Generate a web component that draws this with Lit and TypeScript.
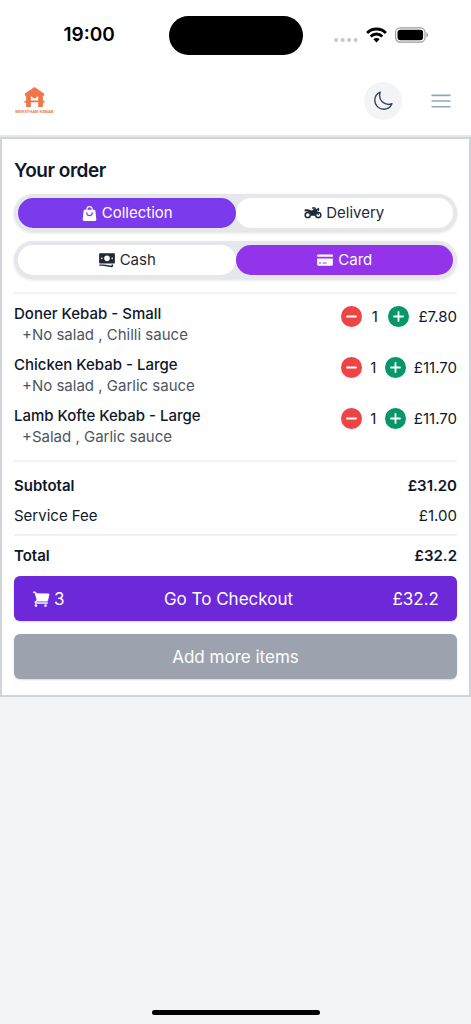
import { LitElement, html, css } from "lit";
import { customElement, property, state } from "lit/decorators.js";

interface Item {
  name: string;
  extras: string;
  qty: number;
  price: string;
}

const moon = html`<svg width="22" height="22" viewBox="0 0 24 24" fill="none" stroke="currentColor" stroke-width="1.5" stroke-linecap="round" stroke-linejoin="round"><path d="M21.752 15.002A9.72 9.72 0 0118 15.75c-5.385 0-9.75-4.365-9.75-9.75 0-1.33.266-2.597.748-3.752A9.753 9.753 0 003 11.25C3 16.635 7.365 21 12.75 21a9.753 9.753 0 009.002-5.998z"/></svg>`;

const bars = html`<svg width="26" height="26" viewBox="0 0 24 24" fill="none" stroke="currentColor" stroke-width="1.5" stroke-linecap="round"><path d="M3.75 6.75h16.5M3.75 12h16.5M3.75 17.25h16.5"/></svg>`;

const bag = html`<svg width="17" height="17" viewBox="0 0 24 24"><path fill="currentColor" fill-rule="evenodd" d="M7.5 6v.75H5.513c-.96 0-1.764.724-1.865 1.679l-1.263 12A1.875 1.875 0 004.25 22.5h15.5a1.875 1.875 0 001.865-2.071l-1.263-12a1.875 1.875 0 00-1.865-1.679H16.5V6a4.5 4.5 0 10-9 0zM12 3a3 3 0 00-3 3v.75h6V6a3 3 0 00-3-3zm-3 8.25a3 3 0 106 0v-.75a.75.75 0 011.5 0v.75a4.5 4.5 0 11-9 0v-.75a.75.75 0 011.5 0v.75z"/></svg>`;

const bike = html`<svg width="18" height="12" viewBox="0 0 36 24" fill="none" stroke="currentColor"><circle cx="7.500" cy="16" r="5.200" stroke-width="3"/><circle cx="28.500" cy="16" r="5.200" stroke-width="3"/><path fill="currentColor" stroke="none" d="M1 5.500C5 4 10 4.500 13 6.500l3 .5 4-3h5l2 4-5 9.500h-8c0-5-3-8-7-8.500L1 8.500z"/><path stroke-width="2.600" stroke-linecap="round" stroke-linejoin="round" d="M17 2h5l6.500 13M25 6l4-3v4"/></svg>`;

const cash = html`<svg width="18" height="18" viewBox="0 0 24 24" fill="currentColor"><path fill-rule="evenodd" d="M2.500 3h19a1 1 0 011 1v11.500a1 1 0 01-1 1h-19a1 1 0 01-1-1V4a1 1 0 011-1zM8.250 9.750a3.750 3.750 0 107.500 0 3.750 3.750 0 00-7.500 0zM17.800 9.750a1.100 1.100 0 102.200 0 1.100 1.100 0 00-2.200 0zM4 9.750a1.100 1.100 0 102.200 0 1.100 1.100 0 00-2.200 0z"/><path d="M2.250 18a.75.75 0 000 1.500c5.400 0 10.630.722 15.600 2.075 1.190.324 2.400-.558 2.400-1.820V18.750a.75.75 0 00-.75-.75h-1.500v1.500C13 18.600 8 18 2.250 18z"/></svg>`;

const card = html`<svg width="18" height="18" viewBox="0 0 24 24" fill="currentColor"><path d="M3 4.500A1.500 1.500 0 001.500 6v1.700h21V6A1.500 1.500 0 0021 4.500z"/><path fill-rule="evenodd" d="M1.500 10h21v8a1.500 1.500 0 01-1.500 1.500H3A1.500 1.500 0 011.500 18zM4 15.200v1.600h3v-1.600zm5 0v1.600h5v-1.600z"/></svg>`;

const cart = html`<svg width="18" height="18" viewBox="0 0 24 24" fill="currentColor" stroke="currentColor" stroke-width=".6"><path d="M2.250 2.250a.75.75 0 000 1.500h1.386c.17 0 .318.114.362.278l2.558 9.592a3.752 3.752 0 00-2.806 3.630c0 .414.336.75.75.75h15.750a.75.75 0 000-1.500H5.378A2.250 2.250 0 017.500 15h12.718a.75.75 0 00.674-.421l1.960-8.500a.75.75 0 00-.725-.965L5.680 4.509l-.232-.867A1.875 1.875 0 003.636 2.250H2.250zM3.750 20.750a1.500 1.500 0 113 0 1.500 1.500 0 01-3 0zM16.500 20.750a1.500 1.500 0 113 0 1.500 1.500 0 01-3 0z"/></svg>`;

@customElement("status-bar")
class StatusBar extends LitElement {
  static styles = css`
    :host {
      display: grid;
      grid-template-columns: 1fr auto 1fr;
      align-items: center;
      height: 70px;
      background: #fff;
      color: #000;
    }
    .time {
      padding-left: 10px;
      justify-self: center;
      font-size: 19px;
      font-weight: 600;
      line-height: 24px;
    }
    .island {
      width: 134px;
      height: 39px;
      border-radius: 20px;
      background: #000;
    }
    .signals {
      display: flex;
      align-items: center;
      justify-self: center;
      gap: 8px;
      padding-right: 10px;
    }
  `;
  render() {
    return html`
      <span class="time">19:00</span>
      <span class="island"></span>
      <span class="signals">
        <svg width="24" height="16" viewBox="0 0 24 16" fill="#c8c8c8"><circle cx="2.100" cy="13" r="2.100"/><circle cx="8.600" cy="13" r="2.100"/><circle cx="15.100" cy="13" r="2.100"/><circle cx="21.600" cy="13" r="2.100"/></svg>
        <svg width="21" height="16" viewBox="0 0 21 16" fill="none" stroke="#000" stroke-width="2.800"><path d="M1.100 5.900a13.300 13.300 0 0118.800 0M4.700 9.400a8.200 8.200 0 0111.600 0"/><path fill="#000" stroke="none" d="M10.500 15.400l-3.100-3.100a4.400 4.400 0 016.200 0z"/></svg>
        <svg width="34" height="16" viewBox="0 0 34 16"><rect x=".6" y=".9" width="29.400" height="14.200" rx="4.600" fill="none" stroke="#999" stroke-width="1.100"/><rect x="2.500" y="2.800" width="25.600" height="10.400" rx="3" fill="#000"/><path fill="#999" d="M31.400 5.600c2 .6 2 4.200 0 4.800z"/></svg>
      </span>
    `;
  }
}

@customElement("site-header")
class SiteHeader extends LitElement {
  static styles = css`
    :host {
      box-sizing: border-box;
      display: flex;
      align-items: center;
      justify-content: space-between;
      height: 67px;
      padding: 0 17px 4px 14px;
      background: #fff;
      border-bottom: 2px solid #e5e7eb;
    }
    .logo,
    svg {
      display: block;
    }
    .brand {
      font-family: "Liberation Sans Narrow", "Liberation Sans", Arial, sans-serif;
      font-size: 4px;
      font-weight: 700;
    }
    .actions {
      display: flex;
      align-items: center;
      gap: 26px;
    }
    button {
      display: grid;
      place-items: center;
      padding: 0;
      border: 0;
      background: none;
      color: #94a3b8;
    }
    .theme {
      width: 38px;
      height: 38px;
      border-radius: 50%;
      background: #f3f4f6;
      color: #334155;
    }
  `;
  render() {
    return html`
      <a class="logo" href="#" aria-label="Merstham Kebab">
        <svg width="41" height="30" viewBox="-3 0 41 30" fill="#f0764a"><path fill-rule="evenodd" d="M17.500 1L27 7.500v2.200h-1.100v5h1.600v2h-1.600V21h-4.700v-4.700h-7.300V21H9.100v-4.300H7.500v-2h1.600v-5H8V7.500zM13.900 10v4.500h7.300V10l-3.700 2.700z"/><text class="brand" x="17.500" y="27" text-anchor="middle">MERSTHAM KEBAB</text></svg>
      </a>
      <div class="actions">
        <button class="theme" aria-label="Dark mode">${moon}</button>
        <button aria-label="Menu">${bars}</button>
      </div>
    `;
  }
}

@customElement("pill-switch")
class PillSwitch extends LitElement {
  @property({ attribute: false }) options: { label: string; icon: unknown }[] = [];
  @property({ type: Number }) selected = 0;
  @property() tone = "violet";
  static styles = css`
    :host {
      display: grid;
      grid-template-columns: 1fr 1fr;
      padding: 4px;
      border-radius: 20px;
      background: #e5e7eb;
      box-shadow: 0 1px 3px rgb(0 0 0 / 0.12);
    }
    button {
      display: flex;
      align-items: center;
      justify-content: center;
      gap: 4px;
      height: 30px;
      padding: 0;
      border: 0;
      border-radius: 15px;
      background: #fff;
      color: #1f2937;
      font: 400 15px/22px Inter, sans-serif;
    }
    .violet[aria-pressed="true"] {
      background: #7c3aed;
      color: #fff;
    }
    .purple[aria-pressed="true"] {
      background: #9333ea;
      color: #fff;
    }
  `;
  render() {
    return this.options.map(
      (o, i) => html`<button class=${this.tone} aria-pressed=${i === this.selected ? "true" : "false"} @click=${() => (this.selected = i)}>${o.icon}<span>${o.label}</span></button>`
    );
  }
}

@customElement("order-line")
class OrderLine extends LitElement {
  @property({ attribute: false }) item!: Item;
  static styles = css`
    :host {
      display: flex;
      justify-content: space-between;
      font-size: 15px;
      line-height: 21px;
    }
    .name {
      color: #0f172a;
      font-weight: 500;
    }
    .extras {
      padding-left: 8px;
      color: #4b5563;
    }
    .controls {
      display: flex;
      align-items: center;
      justify-content: space-between;
      width: 116px;
      height: 26px;
      color: #0f172a;
    }
    button {
      display: grid;
      place-items: center;
      width: 21px;
      height: 21px;
      padding: 0;
      border: 0;
      border-radius: 50%;
      color: #fff;
      box-shadow: 0 1px 4px rgb(0 0 0 / 0.08);
    }
    .minus {
      background: #ef4444;
    }
    .plus {
      background: #059669;
    }
  `;
  render() {
    const { name, extras, qty, price } = this.item;
    const sign = (d: string) => html`<svg width="13" height="13" viewBox="0 0 13 13" fill="none" stroke="currentColor" stroke-width="1.800" stroke-linecap="round"><path d=${d}/></svg>`;
    return html`
      <div>
        <div class="name">${name}</div>
        <div class="extras">${extras}</div>
      </div>
      <div class="controls">
        <button class="minus" aria-label="Remove one">${sign("M2 6.500h9")}</button>
        <span>${qty}</span>
        <button class="plus" aria-label="Add one">${sign("M2 6.500h9M6.500 2v9")}</button>
        <span>${price}</span>
      </div>
    `;
  }
}

@customElement("app-root")
class AppRoot extends LitElement {
  @state() private items: Item[] = [
    { name: "Doner Kebab - Small", extras: "+No salad , Chilli sauce", qty: 1, price: "£7.80" },
    { name: "Chicken Kebab - Large", extras: "+No salad , Garlic sauce", qty: 1, price: "£11.70" },
    { name: "Lamb Kofte Kebab - Large", extras: "+Salad , Garlic sauce", qty: 1, price: "£11.70" },
  ];
  static styles = css`
    :host {
      display: flex;
      flex-direction: column;
      min-height: 100vh;
      background: #f3f4f6;
      color: #0f172a;
      font-family: Inter, sans-serif;
      font-size: 15px;
      line-height: 22px;
    }
    .order {
      padding: 18px 12px 16px;
      border: 2px solid #d1d5db;
      background: #fff;
    }
    h1 {
      margin: 0 0 9px;
      font-size: 19px;
      font-weight: 600;
      line-height: 28px;
      letter-spacing: -0.025em;
    }
    .switches {
      display: grid;
      gap: 9px;
    }
    .lines {
      display: grid;
      gap: 9px;
      margin-top: 13px;
      padding: 9px 0 13px;
      border-top: 2px solid #f0f1f3;
      border-bottom: 2px solid #f0f1f3;
    }
    .sums {
      margin: 0;
    }
    .sum {
      display: flex;
      justify-content: space-between;
    }
    .sum dd {
      margin: 0;
    }
    .strong {
      font-weight: 600;
    }
    .subtotal {
      padding-top: 13px;
    }
    .fee {
      padding: 8px 0 7px;
      border-bottom: 2px solid #f0f1f3;
    }
    .total {
      padding: 9px 0;
    }
    .action {
      display: flex;
      align-items: center;
      justify-content: space-between;
      width: 100%;
      height: 45px;
      padding: 0 18px;
      border: 0;
      border-radius: 6px;
      color: #fff;
      font: 400 17px/24px Inter, sans-serif;
      box-shadow: 0 1px 2px rgb(0 0 0 / 0.15);
    }
    .checkout {
      background: #6d28d9;
    }
    .more {
      justify-content: center;
      margin-top: 13px;
      background: #9ca3af;
    }
    .count {
      display: flex;
      align-items: center;
      gap: 4px;
    }
    .home {
      align-self: center;
      width: 168px;
      height: 5px;
      margin: auto 0 9px;
      border-radius: 3px;
      background: #000;
    }
  `;
  render() {
    return html`
      <status-bar></status-bar>
      <site-header></site-header>
      <main class="order">
        <h1>Your order</h1>
        <div class="switches">
          <pill-switch .options=${[{ label: "Collection", icon: bag }, { label: "Delivery", icon: bike }]}></pill-switch>
          <pill-switch tone="purple" .selected=${1} .options=${[{ label: "Cash", icon: cash }, { label: "Card", icon: card }]}></pill-switch>
        </div>
        <div class="lines">${this.items.map((item) => html`<order-line .item=${item}></order-line>`)}</div>
        <dl class="sums">
          <div class="sum strong subtotal"><dt>Subtotal</dt><dd>£31.20</dd></div>
          <div class="sum fee"><dt>Service Fee</dt><dd>£1.00</dd></div>
          <div class="sum strong total"><dt>Total</dt><dd>£32.2</dd></div>
        </dl>
        <button class="action checkout"><span class="count">${cart}3</span><span>Go To Checkout</span><span>£32.2</span></button>
        <button class="action more"><span>Add more items</span></button>
      </main>
      <div class="home"></div>
    `;
  }
}
